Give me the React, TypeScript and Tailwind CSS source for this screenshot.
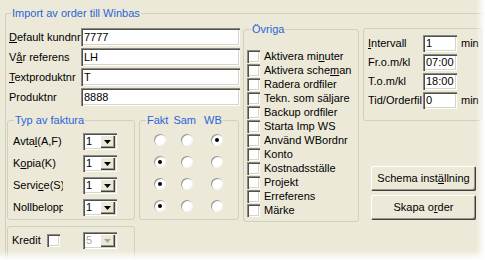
import React from "react";

// classic 3D edges
const sunken =
  "bg-white shadow-[inset_1px_1px_0_#8c8a80,inset_2px_2px_0_#505050,inset_-1px_-1px_0_#ffffff,inset_-2px_-2px_0_#d8d4c8]";
const raised =
  "bg-[#ece9d8] shadow-[inset_1px_1px_0_#ffffff,inset_-1px_-1px_0_#404040,inset_-2px_-2px_0_#9a978a]";

type GroupProps = {
  title?: React.ReactNode;
  className?: string;
  titleClass?: string;
  children?: React.ReactNode;
};

const Group: React.FC<GroupProps> = ({ title, className = "", titleClass = "left-[6px]", children }) => (
  <div className={`relative border border-[#d0d0bf] rounded-[3px] ${className}`}>
    {title && (
      <div className={`absolute -top-[7px] h-[13px] leading-[13px] px-[1px] bg-[#ece9d8] text-[#2a64d8] whitespace-nowrap ${titleClass}`}>
        {title}
      </div>
    )}
    {children}
  </div>
);

const TextBox: React.FC<{ value: string; className?: string }> = ({ value, className = "" }) => (
  <div className={`${sunken} flex items-center pl-[3px] ${className}`}>{value}</div>
);

const Arrow: React.FC<{ color: string }> = ({ color }) => (
  <svg width="7" height="4" viewBox="0 0 7 4">
    <path d="M0 0h7L3.5 4z" fill={color} />
  </svg>
);

const Combo: React.FC<{ value: string; disabled?: boolean }> = ({ value, disabled }) => (
  <div className={`${sunken} flex h-[17px] w-[34px] p-[2px] ${disabled ? "bg-[#f5f4ee]" : ""}`}>
    <div className={`flex-1 flex items-center pl-[1px] leading-none ${disabled ? "text-[#aca899]" : ""}`}>{value}</div>
    <div className={`${raised} w-[15px] flex items-center justify-center`}>
      <Arrow color={disabled ? "#aca899" : "#000"} />
    </div>
  </div>
);

const Check: React.FC = () => <div className={`${sunken} w-[13px] h-[13px] shrink-0`} />;

const Radio: React.FC<{ on?: boolean; className?: string }> = ({ on, className = "" }) => (
  <div
    className={`w-[12px] h-[12px] rounded-full bg-white flex items-center justify-center shadow-[inset_1px_1px_0_#9a988c,inset_-1px_-1px_0_#f4f3ee] ${className}`}
  >
    {on && <div className="w-[4px] h-[4px] rounded-full bg-black" />}
  </div>
);

const fields: [React.ReactNode, string][] = [
  [<><u>D</u>efault kundnr</>, "7777"],
  [<>V<u>å</u>r referens</>, "LH"],
  [<><u>T</u>extproduktnr</>, "T"],
  [<>Produktnr</>, "8888"],
];

const fakturaRows: [React.ReactNode, number][] = [
  [<>Avta<u>l</u>(A,F)</>, 2],
  [<>K<u>o</u>pia(K)</>, 0],
  [<>Servi<u>c</u>e(S)</>, 0],
  [<>Nollbelopp</>, 0],
];

const ovriga: React.ReactNode[] = [
  <>Aktivera mi<u>n</u>uter</>,
  <>Aktivera sche<u>m</u>an</>,
  "Radera ordfiler",
  "Tekn. som säljare",
  "Backup ordfiler",
  "Starta Imp WS",
  "Använd WBordnr",
  "Konto",
  "Kostnadsställe",
  "Projekt",
  "Erreferens",
  "Märke",
];

const timing: [React.ReactNode, string, boolean][] = [
  [<><u>I</u>ntervall</>, "1", true],
  ["Fr.o.m/kl", "07:00", false],
  ["T.o.m/kl", "18:00", false],
  ["Tid/Orderfil", "0", true],
];

export default function App() {
  return (
    <div className="relative w-[485px] h-[260px] overflow-hidden bg-[#ece9d8] text-[11px] leading-[13px] text-black font-['Liberation_Sans',Arial,sans-serif]">
      <div className="pt-[13px] pl-[5px]">
        <Group title="Import av order till Winbas" titleClass="left-[5px]" className="w-[495px] h-[270px] border-r-0 border-b-0 rounded-br-none">
          <div className="flex pl-[1px]">
            {/* left column */}
            <div className="w-[233px] flex flex-col">
              <div className="mt-[14px] flex flex-col gap-[2px]">
                {fields.map(([label, value], i) => (
                  <div key={i} className="flex h-[18px] items-center">
                    <div className="w-[74px] pl-[2px] whitespace-nowrap">{label}</div>
                    <TextBox value={value} className="w-[159px] h-[18px]" />
                  </div>
                ))}
              </div>

              <div className="mt-[14px] flex gap-[4px]">
                <Group title="Typ av faktura" className="w-[128px] h-[100px]">
                  <div className="pt-[12px] pl-[5px] flex flex-col gap-[5px]">
                    {fakturaRows.map(([label], i) => (
                      <div key={i} className="flex h-[17px] items-center">
                        <div className="w-[50px] overflow-hidden whitespace-nowrap">{label}</div>
                        <div className="ml-[20px]">
                          <Combo value="1" />
                        </div>
                      </div>
                    ))}
                  </div>
                </Group>

                <Group
                  title={
                    <div className="flex">
                      <span>Fakt</span>
                      <span className="ml-[5px]">Sam</span>
                      <span className="ml-[8px]">WB</span>
                    </div>
                  }
                  className="w-[100px] h-[100px]"
                >
                  <div className="pt-[13px] pl-[14px] flex flex-col gap-[10px]">
                    {fakturaRows.map(([, sel], i) => (
                      <div key={i} className="flex">
                        <Radio on={sel === 0} />
                        <Radio on={sel === 1} className="ml-[15px]" />
                        <Radio on={sel === 2} className="ml-[18px]" />
                      </div>
                    ))}
                  </div>
                </Group>
              </div>

              <Group className="mt-[6px] w-[128px] h-[40px]">
                <div className="pt-[5px] pl-[4px] flex h-[22px] items-center">
                  <div className="w-[35px]">Kredit</div>
                  <Check />
                  <div className="ml-[23px]">
                    <Combo value="5" disabled />
                  </div>
                </div>
              </Group>
            </div>

            {/* övriga */}
            <Group title="Övriga" titleClass="left-[7px]" className="ml-[3px] mt-[15px] w-[116px] h-[193px]">
              <div className="pt-[19px] pl-[3px] flex flex-col">
                {ovriga.map((label, i) => (
                  <div key={i} className="flex h-[14px] items-center gap-[4px] whitespace-nowrap">
                    <Check />
                    <span>{label}</span>
                  </div>
                ))}
              </div>
            </Group>

            {/* right column */}
            <div className="ml-[4px] mt-[14px] flex flex-col">
              <Group className="w-[119px] h-[93px]">
                <div className="pt-[6px] pl-[4px] flex flex-col gap-[2px]">
                  {timing.map(([label, value, min], i) => (
                    <div key={i} className="flex h-[17px] items-center">
                      <div className="w-[55px] whitespace-nowrap">{label}</div>
                      <TextBox value={value} className="w-[34px] h-[17px]" />
                      {min && <span className="ml-[4px]">min</span>}
                    </div>
                  ))}
                </div>
              </Group>
              <div className="mt-[45px] ml-[8px] flex flex-col gap-[4px]">
                <button className={`${raised} w-[105px] h-[25px] rounded-[2px]`}>
                  Schema inst<u>ä</u>llning
                </button>
                <button className={`${raised} w-[105px] h-[25px] rounded-[2px]`}>
                  Skapa o<u>r</u>der
                </button>
              </div>
            </div>
          </div>
        </Group>
      </div>

      {/* torn paper fade on right and bottom edges */}
      <div className="absolute top-0 right-0 h-full w-[9px] bg-linear-to-r from-[#ece9d8]/0 to-white" />
      <div className="absolute bottom-0 left-0 w-full h-[10px] bg-linear-to-b from-[#ece9d8]/0 to-white" />
    </div>
  );
}
